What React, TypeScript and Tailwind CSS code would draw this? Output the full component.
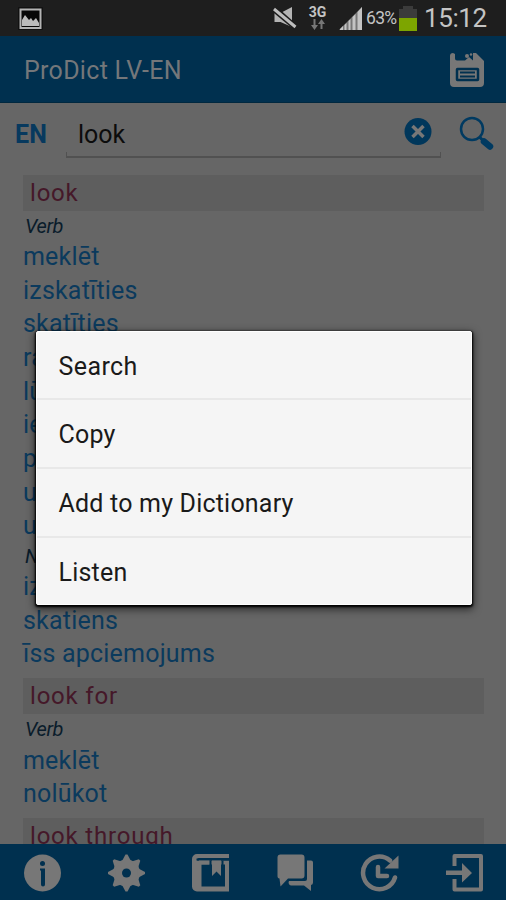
import type { ReactNode } from "react";

function Heading({ children }: { children: ReactNode }) {
  return (
    <div className="flex h-9 w-[461px] shrink-0 items-center bg-[#5e5e5e] pl-[7px] text-[24px] leading-none tracking-[0.8px] text-[#451829]">
      {children}
    </div>
  );
}

function Kind({ children }: { children: ReactNode }) {
  return (
    <div className="flex h-7 shrink-0 items-center pl-[2px] pt-px text-[20px] italic leading-none tracking-[-0.4px] text-[#0a1c2b]">
      {children}
    </div>
  );
}

function Word({ children }: { children: ReactNode }) {
  return (
    <div className="flex h-[33.7px] shrink-0 items-center text-[25px] leading-none tracking-[0.2px] text-[#0b3a5d]">
      {children}
    </div>
  );
}

function StatusBar() {
  return (
    <div className="flex h-9 shrink-0 items-center bg-[#1e1e1e] text-[#c4c4c4]">
      <svg className="ml-[18px]" width="25" height="23" viewBox="0 0 25 23">
        <rect x="0" y="0" width="25" height="23" rx="1" fill="#111111" />
        <rect x="2.500" y="2.500" width="20" height="18.500" fill="#080808" stroke="#b4b4b4" strokeWidth="2" />
        <path d="M4 19v-6l3-5 4 5 2-2 2 3 3-3 3 5v3z" fill="#bcbcbc" />
      </svg>
      <svg className="ml-[230px]" width="24" height="24" viewBox="0 0 24 24">
        <path d="M1.500 7h6L19 1v20L7.500 16h-6z" fill="#b4b4b4" />
        <path d="M0 0l23 20.500" stroke="#1e1e1e" strokeWidth="4" />
        <path d="M1 3.500l21.500 18" stroke="#1e1e1e" strokeWidth="5.500" />
        <path d="M1 3l21.500 18" stroke="#bebebe" strokeWidth="3" />
      </svg>
      <div className="ml-[10px] flex w-[21px] flex-col items-center">
        <span className="text-[14px] font-bold leading-[13px]">3G</span>
        <svg width="14" height="11" viewBox="0 0 14 11" fill="#777777">
          <path d="M2.500 0h2v6H7l-3.500 5L0 6h2.500zM9.500 10h2V5H14L10.500 0 7 5h2.500z" />
        </svg>
      </div>
      <svg className="ml-[11px]" width="24" height="26" viewBox="0 0 24 26">
        <path d="M0 25L23 2v23z" fill="#777777" />
        <path d="M1 24l3-3v4H1zM5.500 20l2-2v7h-2zM9.500 16l2-2v11h-2zM13.500 12l3-3v16h-3zM18.500 7L23 2v23h-4.500z" fill="#c4c4c4" />
      </svg>
      <span className="ml-[3px] mt-px w-[33px] whitespace-nowrap text-[17.5px] leading-none tracking-[-0.7px]">63%</span>
      <svg className="mt-px" width="18" height="25" viewBox="0 0 18 25">
        <path d="M4 0h10v3h4v9H0V3h4z" fill="#3b3b3b" />
        <path d="M0 12h18v13H0z" fill="#7da500" />
      </svg>
      <span className="ml-[7px] text-[26px] leading-none tracking-[-0.4px]">15:12</span>
    </div>
  );
}

function Header() {
  return (
    <div className="flex h-[67px] shrink-0 items-center justify-between border-b border-[#00283f] bg-[#00304f] pl-6 pr-[21px]">
      <span className="mt-[3px] text-[25px] leading-none tracking-[0.3px] text-[#74777a]">ProDict LV-EN</span>
      <svg className="mt-px" width="36" height="36" viewBox="0 0 36 36">
        <path d="M4 1l2 1v4.500a2 2 0 0 0 2 2h8l4-3.500 4 3.500V1h3l8 8v22a4 4 0 0 1-4 4H5a4 4 0 0 1-4-4V4a3 3 0 0 1 3-3z" fill="#777777" />
        <circle cx="18" cy="4" r="2" fill="#777777" />
        <circle cx="22" cy="2.500" r="1.200" fill="#777777" />
        <rect x="8" y="17" width="21" height="11" rx="0.500" fill="#777777" stroke="#00304f" strokeWidth="2.500" />
        <path d="M11 20.500h15M11 24.500h15" stroke="#00304f" strokeWidth="1.800" />
      </svg>
    </div>
  );
}

function SearchRow() {
  return (
    <div className="flex h-[72px] shrink-0">
      <span className="ml-[15px] mt-[19px] w-[51px] text-[25px] font-bold leading-none tracking-[0.3px] text-[#07395e]">EN</span>
      <div className="mt-[49px] h-[6px] w-px bg-[#515151]" />
      <div className="flex h-[55px] w-[373px] justify-between border-b-2 border-[#515151] pl-[11px] pr-[8px]">
        <span className="mt-[19px] text-[25px] leading-none text-[#0c0c0c]">look</span>
        <svg className="mt-[14px]" width="28" height="28" viewBox="0 0 28 28">
          <circle cx="14" cy="14.500" r="13.500" fill="#00375b" />
          <path d="M8.500 9l11 11M19.500 9l-11 11" stroke="#777777" strokeWidth="3.500" />
        </svg>
      </div>
      <div className="mt-[49px] h-[6px] w-px bg-[#515151]" />
      <svg className="ml-[17px] mt-[12px]" width="37" height="37" viewBox="0 0 37 37">
        <circle cx="14" cy="14" r="11" fill="none" stroke="#003a61" strokeWidth="2.500" />
        <path d="M21.500 22l4 4" stroke="#003a61" strokeWidth="3" />
        <path d="M26 26.500l6 5" stroke="#003a61" strokeWidth="6.500" strokeLinecap="round" />
      </svg>
    </div>
  );
}

const TEETH = [0, 45, 90, 135, 180, 225, 270, 315];

function BottomBar() {
  const c = "#777777";
  const b = "#00304f";
  return (
    <div className="flex h-14 shrink-0 items-center justify-between bg-[#00304f] pl-[23px] pr-[22px] pt-px">
      <svg width="40" height="40" viewBox="0 0 40 40">
        <circle cx="19.500" cy="20" r="18.500" fill={c} />
        <circle cx="19.500" cy="10.500" r="2.500" fill={b} />
        <path d="M17 15.500h5v16a2 2 0 0 1-4 0v-14h-1z" fill={b} />
      </svg>
      <svg width="40" height="40" viewBox="0 0 40 40">
        <g fill={c}>
          <circle cx="19.500" cy="20" r="13.500" />
          {TEETH.map((angle) => (
            <path key={angle} d="M14.500 9L18.500 1.500h2L24.500 9z" transform={`rotate(${angle} 19.500 20)`} />
          ))}
        </g>
        <circle cx="19.500" cy="20" r="4.500" fill={b} />
      </svg>
      <svg width="40" height="40" viewBox="0 0 40 40">
        <path d="M6 1h32v4H8a2 2 0 0 0-2 2.500h32v31H6a5 5 0 0 1-5-5v-27.500a5 5 0 0 1 5-5z" fill={c} />
        <path d="M5.500 6.500h32.500" stroke={b} strokeWidth="2.200" />
        <path d="M10.500 11.500H34v22H10.500z" fill={b} />
        <path d="M8 7.500h10.500v4H8zM21 7.500h9v15.500l-4.500-4.500L21 23z" fill={c} />
        <path d="M19.500 7.500v15M31.500 7.500v8" stroke={b} strokeWidth="2" />
      </svg>
      <svg width="40" height="40" viewBox="0 0 40 40">
        <path d="M4.500 1.500h21a3 3 0 0 1 3 3v18a3 3 0 0 1-3 3H12l-7.500 8-1-8a2 2 0 0 1-2-2v-19a3 3 0 0 1 3-3z" fill={c} />
        <path d="M31 7.500h4a2 2 0 0 1 2 2v20a2.500 2.500 0 0 1-2 2.500v6l-7-5.500H15a3 3 0 0 1-2-4.500h16a2 2 0 0 0 2-2z" fill={c} />
      </svg>
      <svg width="40" height="40" viewBox="0 0 40 40">
        <path d="M30 7.500A16.300 16.300 0 1 0 35 24.500" fill="none" stroke={c} strokeWidth="4.500" strokeLinecap="round" />
        <path d="M38.500 2.500v13H24.500z" fill={c} />
        <path d="M18 14v9H27" fill="none" stroke={c} strokeWidth="4.500" strokeLinejoin="round" strokeLinecap="round" />
      </svg>
      <svg width="40" height="40" viewBox="0 0 40 40">
        <path d="M10.500 13V3h26.500v33.500H10.500V26" fill="none" stroke={c} strokeWidth="4" strokeLinejoin="round" />
        <path d="M2 17.500h16V10L28 20 18 29.500V22H2z" fill={c} />
      </svg>
    </div>
  );
}

function Menu() {
  return (
    <div className="absolute left-9 top-[331px] flex h-[274px] w-[435.5px] flex-col rounded-[2px] border border-white bg-[#f5f5f5] text-[25px] leading-none tracking-[0.2px] text-[#1a1a1a] shadow-[0_1px_2px_1px_#000,0_3px_8px_1px_rgba(0,0,0,0.65)]">
      <div className="flex h-[68px] items-center border-b-2 border-[#e8e8e8] pl-[21.5px] pt-[2px] tracking-[0.4px]">Search</div>
      <div className="flex h-[69px] items-center border-b-2 border-[#e8e8e8] pl-[21.5px] pt-[2px]">Copy</div>
      <div className="flex h-[69px] items-center border-b-2 border-[#e8e8e8] pl-[21.5px] pt-[2px]">Add to my Dictionary</div>
      <div className="flex flex-1 items-center pl-[21.5px] pt-[3px]">Listen</div>
    </div>
  );
}

export default function App() {
  return (
    <div className="relative flex h-[900px] w-[506px] flex-col overflow-hidden bg-[#666666] font-[Roboto,sans-serif]">
      <StatusBar />
      <Header />
      <SearchRow />
      <div className="flex min-h-0 flex-1 flex-col overflow-hidden pl-[23px]">
        <Heading>look</Heading>
        <Kind>Verb</Kind>
        <div className="mt-[0.5px] flex flex-col">
          <Word>meklēt</Word>
          <Word>izskatīties</Word>
          <Word>skatīties</Word>
          <Word>raudzīties</Word>
          <Word>lūkoties</Word>
          <Word>ieskatīties</Word>
          <Word>paskatīties</Word>
          <Word>uzlūkot</Word>
          <Word>uzskatīt</Word>
        </div>
        <div className="-mt-px flex flex-col">
          <Kind>Noun</Kind>
          <Word>izskats</Word>
          <Word>skatiens</Word>
          <Word>īss apciemojums</Word>
        </div>
        <div className="mt-[7.5px]"><Heading>look for</Heading></div>
        <Kind>Verb</Kind>
        <div className="mt-px flex flex-col">
          <Word>meklēt</Word>
          <Word>nolūkot</Word>
        </div>
        <div className="mt-[7px]"><Heading>look through</Heading></div>
      </div>
      <BottomBar />
      <Menu />
    </div>
  );
}
